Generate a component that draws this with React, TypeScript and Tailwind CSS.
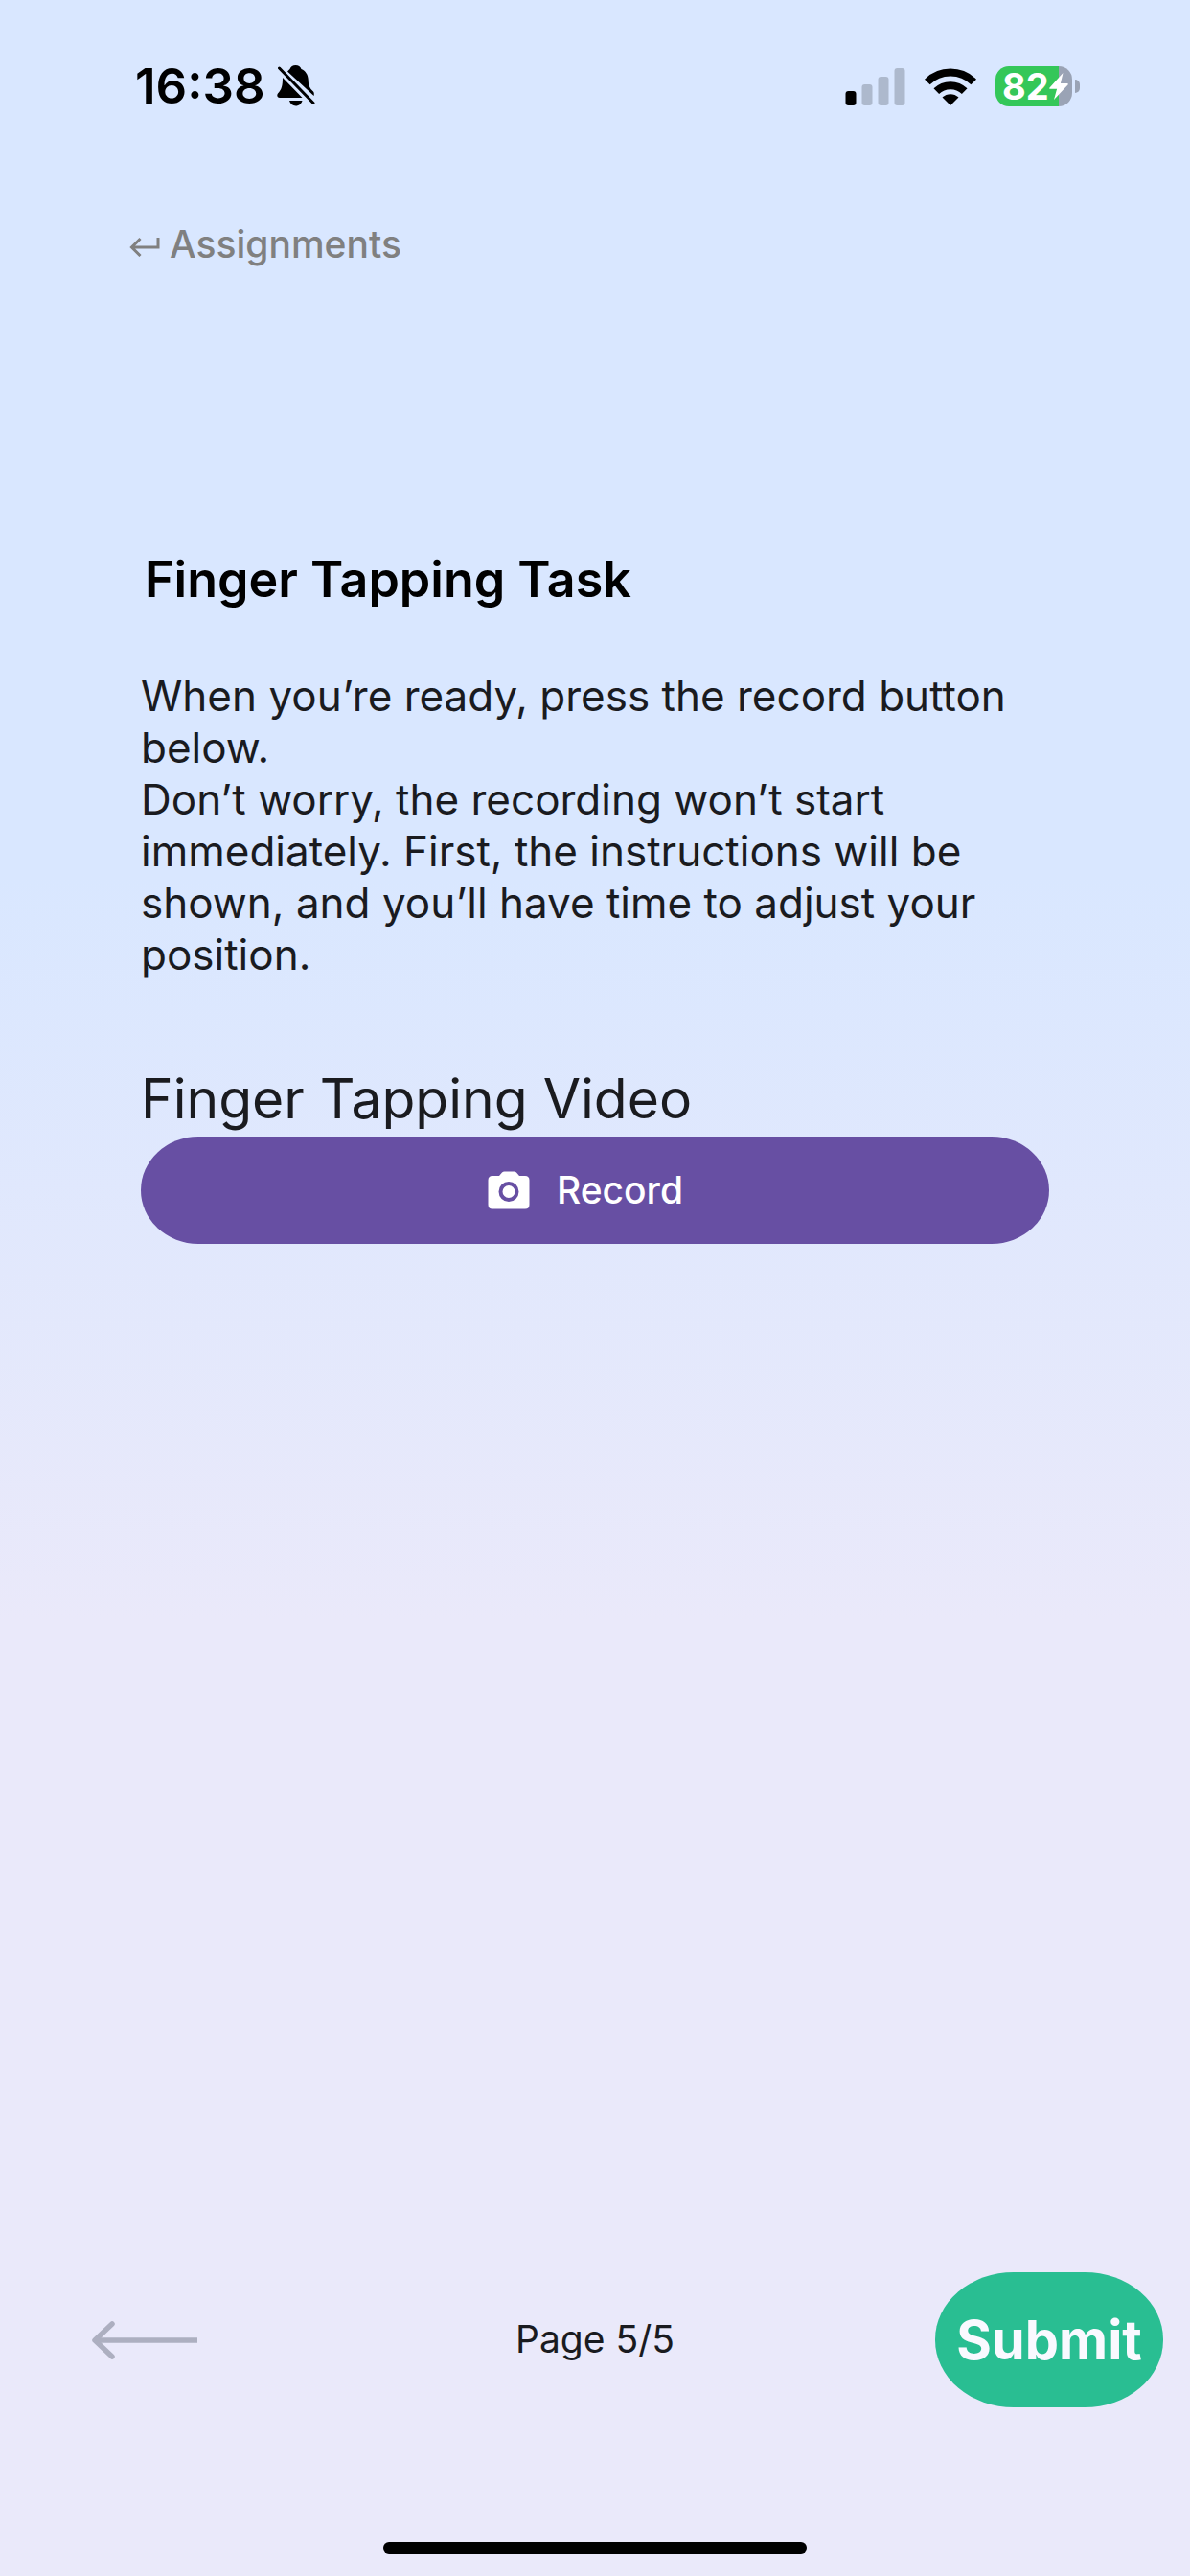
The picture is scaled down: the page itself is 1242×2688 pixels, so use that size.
function BellOff() {
  return (
    <svg viewBox="0 0 40 44" className="h-11 w-10" aria-label="Silent mode" role="img">
      <path d="M11 6.500 13.500 4C14.500 1.500 16.500 0 19.500 0s5 1.500 6 4c4.500 2 7 6 7.200 11 .2 5.500 1 8.500 5.300 12.500.8.800 1 2.500.6 4.500Z" fill="#000" />
      <path d="M6 13 26.500 34H3c-2.500 0-3.500-2.500-2-4.500C5 25.500 6 21 6 13Z" fill="#000" />
      <path d="M13 37h13.500c-1 3.300-3.600 5.500-6.800 5.500S14 40.300 13 37Z" fill="#000" />
      <path d="M2.500 3 38 39.500" stroke="#000" strokeWidth="3" strokeLinecap="round" />
    </svg>
  );
}

function Signal() {
  return (
    <svg viewBox="0 0 63 39" className="h-[39px] w-[63px]" aria-label="Signal strength" role="img">
      <rect x="0.500" y="24" width="11" height="15" rx="3" fill="#000" />
      <rect x="17.500" y="17" width="11" height="22" rx="3" fill="#adb9cd" />
      <rect x="34.500" y="9" width="11" height="30" rx="3" fill="#adb9cd" />
      <rect x="51.500" y="0" width="11" height="39" rx="3" fill="#adb9cd" />
    </svg>
  );
}

function Wifi() {
  return (
    <svg viewBox="0 0 54 39" className="h-[39px] w-[54px]" aria-label="Wi-Fi" role="img">
      <g fill="none" stroke="#000" strokeWidth="8">
        <path d="M2.800 14.500a34.500 34.500 0 0 1 48.400 0" />
        <path d="M12.300 24.200a21 21 0 0 1 29.400 0" />
      </g>
      <path d="M27 39 18.500 30.600c4.800-4.600 12.200-4.600 17 0Z" fill="#000" />
    </svg>
  );
}

function Battery() {
  return (
    <div className="flex items-center gap-[3px]">
      <div className="relative flex h-[42px] w-20 items-center rounded-[14px] bg-[linear-gradient(to_right,#34c759_66px,#9aa3b5_66px)]">
        <span className="pl-[7px] text-[38px] leading-[42px] font-bold text-white">82</span>
        <svg viewBox="0 0 20 28" className="absolute right-1 h-7 w-5" aria-hidden="true">
          <path d="M14.500 0 .5 15.500c-.5.800-.2 1.300.6 1.300h7L5 28 19.500 12.500c.6-.8.300-1.500-.6-1.500h-7Z" fill="#fff" />
        </svg>
      </div>
      <div className="h-[14px] w-[5px] rounded-r-full bg-[#9aa3b5]" />
    </div>
  );
}

export default function App() {
  return (
    <div className="flex min-h-screen flex-col bg-[linear-gradient(to_bottom,#d9e7ff_0%,#d9e7ff_34%,#eae9fa_63%,#eae9fa_100%)] font-['Inter',sans-serif] text-[#1a1b1f]">
      <header className="flex items-center justify-between pt-[60px] pr-[115px] pl-[141px]">
        <div className="flex h-[60px] items-center gap-3">
          <time className="text-[51px] leading-[60px] font-semibold text-black">16:38</time>
          <BellOff />
        </div>
        <div className="flex items-center gap-5">
          <Signal />
          <Wifi />
          <Battery />
        </div>
      </header>

      <nav className="px-[135px] pt-[110px]">
        <a href="#assignments" className="inline-flex items-center gap-[10px] text-[39px] leading-[50px] font-medium text-[#808080]">
          <svg viewBox="0 0 32 22" className="mt-1 h-[22px] w-8" fill="none" stroke="currentColor" strokeWidth="3" aria-hidden="true">
            <path d="M30 2v10H3M11.500 3 2.500 12l9 9" />
          </svg>
          Assignments
        </a>
      </nav>

      <main className="flex flex-1 flex-col px-[147px] pt-[290px]">
        <h1 className="pl-1 text-[52px] leading-[70px] font-semibold text-black">Finger Tapping Task</h1>
        <p className="pt-[59px] text-[44px] leading-[54px]">
          When you’re ready, press the record button below.
          <br />
          Don’t worry, the recording won’t start immediately. First, the instructions will be shown, and you’ll have time to adjust your position.
        </p>
        <h2 className="pt-[85px] text-[57px] leading-[78px]">Finger Tapping Video</h2>
        <button type="button" className="flex h-28 items-center justify-center gap-7 rounded-[60px/56px] bg-[#674fa3] pr-5 text-[39px] font-medium text-white">
          <svg viewBox="0 0 44 40" className="h-10 w-11" aria-hidden="true">
            <path d="M5 5h7l3-3.500Q16 .5 17.500.5h10q1.500 0 2.500 1L33 5h6q4.500 0 4.500 4.500V35q0 4.500-4.500 4.500H5Q.5 39.500.5 35V9.500Q.5 5 5 5Z" fill="#fff" />
            <circle cx="22" cy="21.500" r="8.500" fill="#fff" stroke="#674fa3" strokeWidth="4" />
          </svg>
          Record
        </button>
      </main>

      <footer className="grid grid-cols-[1fr_auto_1fr] items-center px-7">
        <button type="button" aria-label="Previous page" className="justify-self-start pl-[68px]">
          <svg viewBox="0 0 110 42" className="h-[42px] w-[110px]" fill="none" stroke="#adafc0" strokeWidth="5.500">
            <path d="M3 21h107" />
            <path d="M21 4 3 21l18 17" strokeLinecap="round" strokeLinejoin="round" />
          </svg>
        </button>
        <p className="text-[39px]">Page 5/5</p>
        <button type="button" className="h-[141px] w-[238px] justify-self-end rounded-[82px/70px] bg-[#29be92] text-[56px] font-bold text-[#f9f9ff]">
          Submit
        </button>
      </footer>
      <div className="mx-auto mt-[141px] mb-[23px] h-3 w-[442px] rounded-full bg-black" />
    </div>
  );
}
